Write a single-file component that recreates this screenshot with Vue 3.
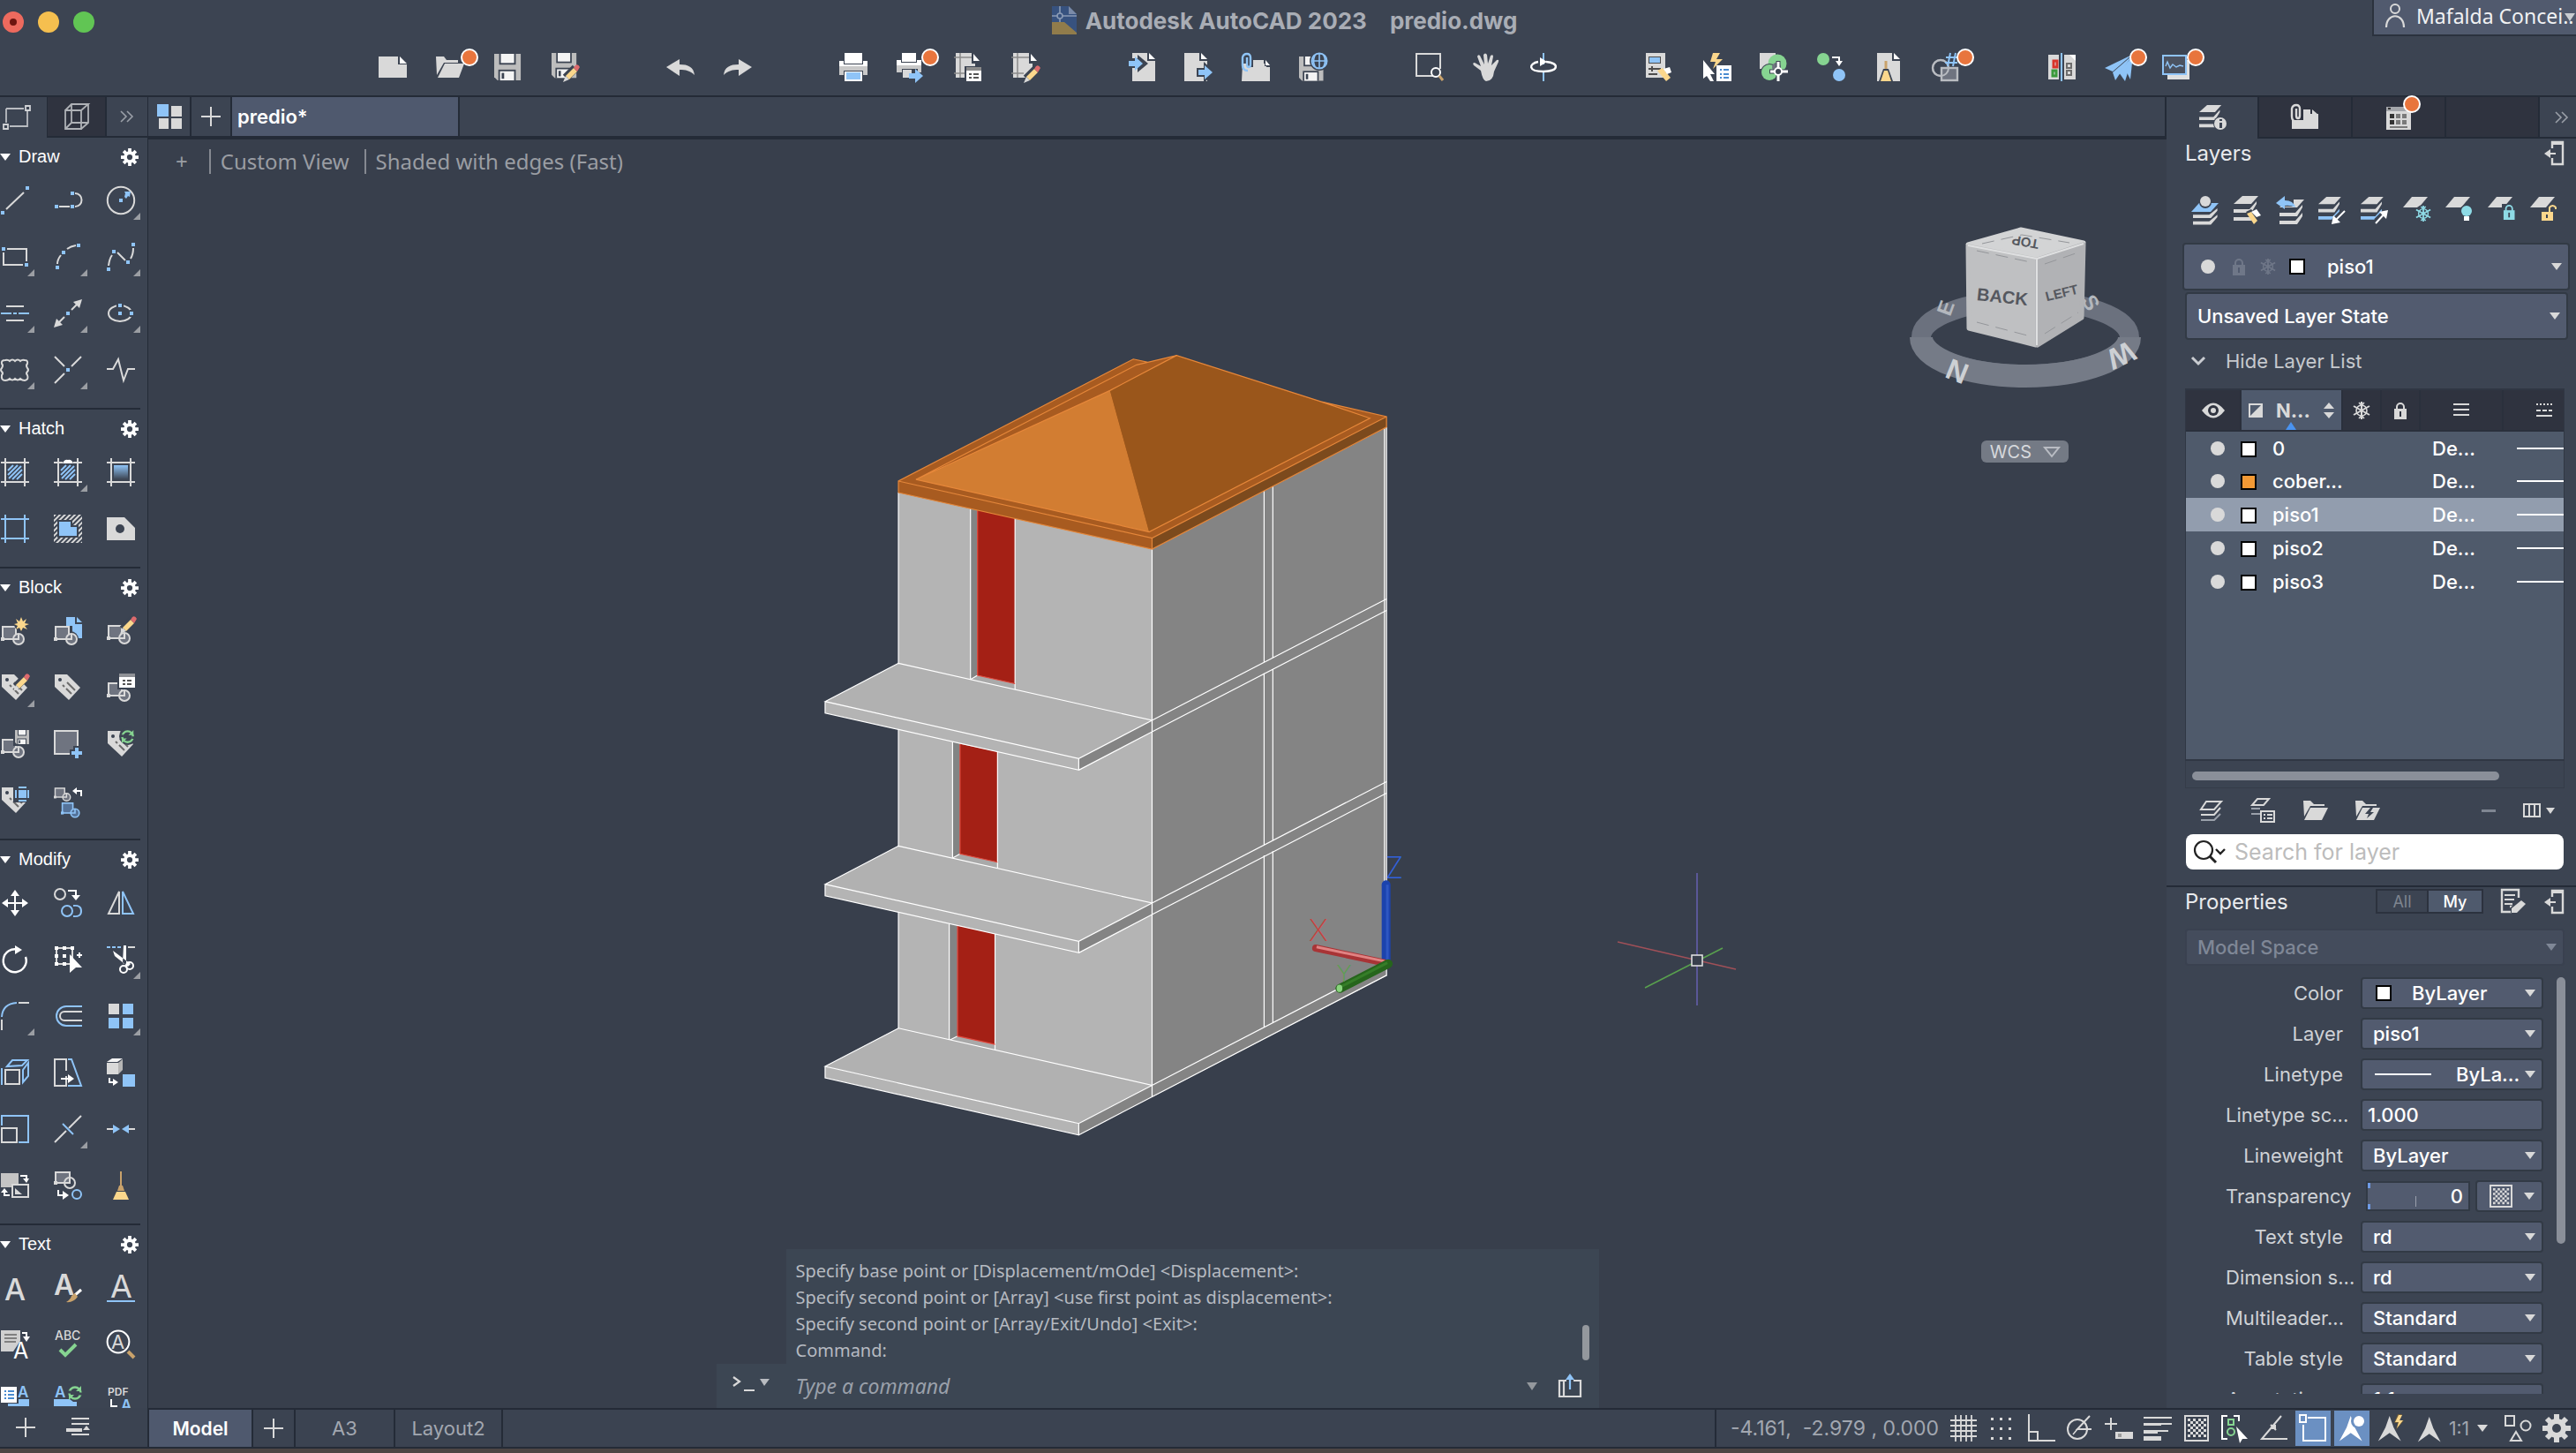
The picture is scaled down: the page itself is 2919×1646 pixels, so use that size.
<template>
  <div class="app">
    <header class="topbar">
      <div class="lights">
        <i class="light red"></i><i class="light yellow"></i><i class="light green"></i>
      </div>
      <h1 class="title">
        <svg class="title-icon" viewBox="0 0 28 32" v-html="icons.dwg"></svg>
        <span>Autodesk AutoCAD 2023</span>
        <span class="title-file">predio.dwg</span>
      </h1>
      <button class="user">
        <svg width="24" height="28" viewBox="0 0 24 28" v-html="icons.person"></svg>
        <span>Mafalda Concei..</span>
        <i class="user-caret"></i>
      </button>
      <nav class="tools">
        <div v-for="(group, g) in toolGroups" :key="g" class="tool-group">
          <button v-for="name in group" :key="name" class="tool" :aria-label="name.replace('*', '')">
            <svg width="32" height="32" viewBox="0 0 32 32" v-html="icons[name.replace('*', '')]"></svg>
            <i v-if="name.endsWith('*')" class="dot"></i>
          </button>
        </div>
      </nav>
    </header>

    <div class="main">
      <aside class="palette">
        <div class="palette-tabs">
          <button class="ptab on" aria-label="Drafting"><svg width="32" height="28" viewBox="0 0 32 28" v-html="icons.drafting"></svg></button>
          <button class="ptab cube" aria-label="Modeling"><svg width="30" height="32" viewBox="0 0 30 32" v-html="icons.modeling"></svg></button>
          <button class="ptab more" aria-label="More"><svg width="16" height="14" viewBox="0 0 16 14" v-html="icons.chevrons"></svg></button>
        </div>
        <div class="palette-body">
          <section v-for="s in sections" :key="s.title" class="section">
            <div class="section-head">
              <i class="tri"></i>
              <h2>{{ s.title }}</h2>
              <button class="gear" aria-label="Settings"><svg width="20" height="20" viewBox="0 0 32 32" v-html="icons.gearWhite"></svg></button>
            </div>
            <div class="grid">
              <button v-for="name in s.items" :key="name" class="cell" :class="{ fly: name.endsWith('+') }" :aria-label="name.replace('+', '')">
                <svg width="32" height="32" viewBox="0 0 32 32" v-html="icons[name.replace('+', '')]"></svg>
              </button>
            </div>
          </section>
        </div>
      </aside>

      <main class="center">
        <div class="doc-tabs">
          <button class="dtab start" aria-label="Start"><svg width="28" height="28" viewBox="0 0 28 28" v-html="icons.start"></svg></button>
          <button class="dtab plus" aria-label="New tab"><svg width="22" height="22" viewBox="0 0 22 22" v-html="icons.plus"></svg></button>
          <button class="dtab file">predio*</button>
        </div>

        <div class="canvas">
          <svg class="scene" viewBox="167 158 2287 1437">
            <svg x="900" y="370" width="740" height="930" viewBox="0 0 1568 1568" preserveAspectRatio="none" class="model">
              <polygon points="248,317 857,425 857,1472 248,1364" fill="#b4b4b4" />
              <polygon points="857,425 1420,192 1420,1240 857,1472" fill="#848484" />
              <g v-for="w in windows" :key="w.y">
                <polygon :points="`${w.x},${w.y} ${w.r},${w.y + 4} ${w.r},${w.b} ${w.x},${w.b + 8}`" fill="#828484" />
                <polygon :points="`${w.r},${w.y + 4} ${w.e},${w.y + 19} ${w.e},${w.b + 16} ${w.r},${w.b}`" fill="#a42015" />
                <polygon :points="`${w.x},${w.b + 8} ${w.r},${w.b} ${w.e},${w.b + 16} ${w.e},${w.b + 27}`" fill="#a9a9a9" />
                <path class="edge" :d="`M${w.x} ${w.y}V${w.b + 8}M${w.e} ${w.y + 19}V${w.b + 27}M${w.x} ${w.b + 8}L${w.r} ${w.b}`" />
                <path class="edge rededge" :d="`M${w.r} ${w.y + 4}V${w.b}L${w.e} ${w.b + 16}`" />
              </g>
              <path class="edge" d="M857 425V1472M248 317V1342M1415 194V1218M1420 192V1240" />
              <g v-for="dy in [0, 349, 697]" :key="dy" :transform="`translate(0 ${dy})`">
                <polygon points="248,643 857,752 681,825 72,716" fill="#b1b1b1" />
                <polygon points="72,716 681,825 681,847 72,738" fill="#b4b4b4" />
                <polygon points="681,825 857,752 857,774 681,847" fill="#848484" />
                <path class="edge" d="M248 643L857 752 681 825 72 716zM72 716V738L681 847V825M681 847L857 774M857 752V774M857 752L1420 520M857 774L1420 542M1126 313V641M1147 305V633" />
              </g>
              <polygon points="248,295 812,62 847,68 916,55 1262,143 1420,172 857,404" fill="#a85b20" />
              <polygon points="248,295 857,404 857,425 248,317" fill="#a85b20" />
              <polygon points="857,404 1420,172 1420,192 857,425" fill="#7c4a1d" />
              <polygon points="290,292 756,122 850,392" fill="#d27d32" />
              <polygon points="756,122 916,55 1380,175 850,392" fill="#9a561b" />
              <path class="edge roof" d="M248 317V295L812 62 847 68 916 55 1262 143 1420 172V192L857 425 248 317M248 295L857 404 1420 172M857 404V425M290 292L850 392 1380 175 1262 143M290 292L820 73 847 68M290 292L756 122 916 55" />
              <path d="M1419 1215V1066" fill="none" stroke="#1c43ad" class="rod" />
              <path d="M1422 1215V1066" fill="none" stroke="#2f57c2" class="shine" />
              <path d="M1250 1187L1415 1215" fill="none" stroke="#a83436" class="rod thin" />
              <path d="M1252 1185L1415 1212" fill="none" stroke="#e08383" class="shine" />
              <path d="M1308 1264L1424 1217" fill="none" stroke="#26651c" class="rod" />
              <path d="M1310 1261L1422 1215" fill="none" stroke="#357d28" class="shine" />
              <ellipse cx="1307" cy="1264" rx="7" ry="7" fill="#8ad47e" />
            </svg>
            <g class="axis">
              <text x="1579" y="995" fill="#3262dc">Z</text>
              <text x="1493" y="1066" fill="#c9423f">X</text>
              <text x="1522" y="1112" fill="#59a04e" class="small">Y</text>
            </g>

            <g fill="none" stroke-width="1.5">
              <path d="M1922 989V1139" stroke="#6660b0" />
              <path d="M1832 1067L1966 1098" stroke="#a05058" />
              <path d="M1863 1119L1951 1074" stroke="#59a04e" />
              <rect x="1916" y="1082" width="12" height="12" fill="#383f4c" stroke="#e6e6e6" />
            </g>

            <g class="viewcube">
              <ellipse cx="2294" cy="382" rx="118" ry="42" fill="none" stroke="#6b717e" stroke-width="22" />
              <path d="M2176 382a118 44 0 0 0 236 0" fill="none" stroke="#757b87" stroke-width="26" />
              <text x="2217" y="432" class="dir" transform="rotate(22 2217 420)">N</text>
              <text x="2403" y="415" class="dir" transform="rotate(155 2403 403)">W</text>
              <text x="2204" y="357" class="dir small" transform="rotate(-70 2204 349)">E</text>
              <text x="2368" y="351" class="dir small" transform="rotate(60 2368 343)">S</text>
              <g stroke-width="5" stroke-linejoin="round">
                <polygon points="2229,277 2289,260 2360,275 2307,292" fill="#d3d4d5" stroke="#d3d4d5" />
                <polygon points="2229,279 2306,294 2306,391 2230,372" fill="#bfc0c2" stroke="#bfc0c2" />
                <polygon points="2308,294 2360,277 2358,360 2308,391" fill="#b1b2b5" stroke="#b1b2b5" />
              </g>
              <path d="M2307 293V391M2229 278L2307 293 2360 276" fill="none" stroke="#dfe0e1" stroke-width="2" />
              <path d="M2239 284L2300 297M2239 365L2300 381M2316 299L2354 286M2316 378L2354 354M2245 276L2290 266 2344 275" fill="none" stroke="#94969a" stroke-dasharray="14 8" />
              <text x="2268" y="343" class="face" transform="rotate(6 2268 336)">BACK</text>
              <text x="2335" y="337" class="face mini" transform="rotate(-14 2335 331)">LEFT</text>
              <text x="2294" y="281" class="face mini" transform="rotate(190 2294 275)">TOP</text>
            </g>
          </svg>

          <div class="view-labels">
            <button>+</button>
            <button>Custom View</button>
            <button>Shaded with edges (Fast)</button>
          </div>

          <button class="wcs"><span>WCS</span><svg width="18" height="12" viewBox="0 0 18 12"><path d="M1 1H17L9 11z" fill="none" stroke="#b9bcc3" stroke-width="2" /></svg></button>

          <div class="command">
            <div class="history">
              <p v-for="(line, i) in history" :key="i">{{ line }}</p>
              <i class="history-bar"></i>
            </div>
            <div class="prompt">
              <button class="prompt-btn" aria-label="Recent commands">
                <svg width="44" height="24" viewBox="0 0 44 24" v-html="icons.prompt"></svg>
              </button>
              <input v-model="command" type="text" placeholder="Type a command" aria-label="Command" />
              <i class="caret-sm"></i>
              <button class="share" aria-label="Expand"><svg width="26" height="28" viewBox="0 0 26 28" v-html="icons.share"></svg></button>
            </div>
          </div>
        </div>
      </main>

      <aside class="panel">
        <div class="panel-tabs">
          <button class="rtab on" aria-label="Layers"><svg width="34" height="30" viewBox="0 0 34 30" v-html="icons.layersInfo"></svg></button>
          <button class="rtab" aria-label="References"><svg width="32" height="30" viewBox="0 0 32 30" v-html="icons.clipDoc"></svg></button>
          <button class="rtab" aria-label="Blocks"><svg width="28" height="28" viewBox="0 0 28 28" v-html="icons.tableDoc"></svg><i class="dot"></i></button>
          <button class="rtab" aria-label="Empty"></button>
          <button class="rtab end" aria-label="More"><svg width="16" height="14" viewBox="0 0 16 14" v-html="icons.chevrons"></svg></button>
        </div>

        <div class="panel-head">
          <h2>Layers</h2>
          <button aria-label="Undock"><svg width="24" height="28" viewBox="0 0 24 28" v-html="icons.undock"></svg></button>
        </div>
        <div class="layer-tools">
          <button v-for="name in layerTools" :key="name" :aria-label="name"><svg width="32" height="32" viewBox="0 0 32 32" v-html="icons[name]"></svg></button>
        </div>
        <div class="combo wide">
          <svg class="combo-icons" width="116" height="24" viewBox="0 0 116 24" v-html="icons.currentLayer"></svg>
          <select v-model="currentLayer" aria-label="Current layer" class="indent">
            <option v-for="l in layers" :key="l.name">{{ l.name }}</option>
          </select>
          <i class="caret"></i>
        </div>
        <div class="combo big">
          <select aria-label="Layer state"><option>Unsaved Layer State</option></select>
          <i class="caret"></i>
        </div>
        <button class="toggle">
          <svg width="18" height="12" viewBox="0 0 18 12"><path d="M2 2L9 9 16 2" fill="none" stroke="#c9ccd1" stroke-width="3" /></svg>
          <span>Hide Layer List</span>
        </button>

        <div class="layer-list">
          <table>
            <colgroup><col class="c1" /><col class="c2" /><col class="c3" /><col class="c3" /><col class="c4" /><col /></colgroup>
            <thead>
              <tr>
                <th><svg width="26" height="18" viewBox="0 0 26 18" v-html="icons.eye"></svg></th>
                <th class="sorted">
                  <div class="name-head">
                    <svg width="16" height="16" viewBox="0 0 16 16" v-html="icons.halfSquare"></svg>
                    <span>N...</span>
                    <svg width="12" height="18" viewBox="0 0 12 18"><path d="M0 7L6 0 12 7zM0 11H12L6 18z" fill="#d9d9d9" /></svg>
                  </div>
                  <i class="sort-mark"></i>
                </th>
                <th><svg width="20" height="20" viewBox="0 0 20 20" v-html="snow('#d9d9d9')"></svg></th>
                <th><svg width="16" height="20" viewBox="0 0 16 20" v-html="lock('#d9d9d9', '#2f333f')"></svg></th>
                <th><svg width="18" height="16" viewBox="0 0 18 16"><path d="M0 1H18M0 7H18M0 13H18" stroke="#d9d9d9" stroke-width="2" /></svg></th>
                <th class="last"><svg width="18" height="16" viewBox="0 0 18 16"><path d="M0 1H18" stroke="#d9d9d9" stroke-width="2" stroke-dasharray="2 2" /><path d="M0 8H18" stroke="#d9d9d9" stroke-width="2" stroke-dasharray="5 2" /><path d="M0 14H18" stroke="#d9d9d9" stroke-width="2" /></svg></th>
              </tr>
            </thead>
            <tbody>
              <tr v-for="l in layers" :key="l.name" :class="{ selected: l.name === currentLayer }">
                <td><i class="bulb"></i></td>
                <td colspan="3"><i class="swatch" :class="{ orange: l.orange }"></i><span>{{ l.label || l.name }}</span></td>
                <td class="weight">De...</td>
                <td><i class="ltype"></i></td>
              </tr>
            </tbody>
          </table>
        </div>
        <div class="hscroll"><i></i></div>

        <div class="list-tools">
          <svg width="26" height="24" viewBox="0 0 26 24" v-html="icons.newLayer"></svg>
          <svg width="30" height="28" viewBox="0 0 30 28" v-html="icons.layerStates"></svg>
          <svg width="28" height="22" viewBox="0 0 28 22" v-html="icons.folder"></svg>
          <svg width="28" height="22" viewBox="0 0 28 22" v-html="icons.folderBolt"></svg>
          <i class="minus"></i>
          <svg width="36" height="18" viewBox="0 0 36 18" v-html="icons.columns"></svg>
        </div>
        <label class="search">
          <svg width="36" height="26" viewBox="0 0 36 26" v-html="icons.search"></svg>
          <input v-model="query" type="text" placeholder="Search for layer" aria-label="Search for layer" />
        </label>

        <div class="panel-head props-head">
          <h2>Properties</h2>
          <div class="switch"><button>All</button><button class="on">My</button></div>
          <button aria-label="Customize"><svg width="28" height="28" viewBox="0 0 28 28" v-html="icons.editDoc"></svg></button>
          <button aria-label="Undock"><svg width="24" height="28" viewBox="0 0 24 28" v-html="icons.undock"></svg></button>
        </div>
        <div class="combo space">
          <select disabled aria-label="Space"><option>Model Space</option></select>
          <i class="caret"></i>
        </div>
        <div class="props">
          <div class="prop-list">
            <div v-for="(p, i) in props" :key="i" class="prop">
              <label :for="'prop' + i"><span>{{ p.label }}</span></label>
              <input v-if="p.kind === 'input'" :id="'prop' + i" class="field" type="text" :value="p.value" />
              <div v-else-if="p.kind === 'slider'" class="transparency">
                <input :id="'prop' + i" type="text" :value="p.value" />
                <button aria-label="Transparency mode"><svg width="26" height="26" viewBox="0 0 26 26" v-html="icons.checker"></svg><i class="caret-inline"></i></button>
              </div>
              <div v-else class="combo small">
                <i v-if="p.kind === 'color'" class="swatch over"></i>
                <i v-if="p.kind === 'line'" class="ltype over"></i>
                <select :id="'prop' + i" :class="p.kind"><option>{{ p.value }}</option></select>
                <i class="caret"></i>
              </div>
            </div>
          </div>
          <i class="vscroll"></i>
        </div>
      </aside>
    </div>

    <footer class="status">
      <div class="palette-foot">
        <button aria-label="Add"><svg width="22" height="22" viewBox="0 0 22 22" v-html="icons.plus"></svg></button>
        <button aria-label="Menu"><svg width="26" height="22" viewBox="0 0 26 22" v-html="icons.menu"></svg></button>
      </div>
      <button class="stab model-tab">Model</button>
      <button class="stab add" aria-label="New layout"><svg width="22" height="22" viewBox="0 0 22 22" v-html="icons.plus"></svg></button>
      <button class="stab a3">A3</button>
      <button class="stab layout">Layout2</button>
      <div class="status-right">
        <span class="coords">-4.161,&nbsp; -2.979 , 0.000</span>
        <button v-for="name in statusTools" :key="name" class="sbtn" :class="{ on: name === 'osnap' || name === 'annoVis' }" :aria-label="name">
          <svg width="32" height="32" viewBox="0 0 32 32" v-html="icons[name]"></svg>
        </button>
        <button class="scale">1:1<i class="caret-inline"></i></button>
        <button class="sbtn" aria-label="Workspace"><svg width="32" height="32" viewBox="0 0 32 32" v-html="icons.shapes"></svg></button>
        <button class="sbtn" aria-label="Settings"><svg width="32" height="32" viewBox="0 0 32 32" v-html="icons.gearGrey"></svg></button>
      </div>
    </footer>
    <div class="desktop"></div>
  </div>
</template>

<script setup>
import { ref } from 'vue'

const G = '#d9d9d9'
const W = '#ffffff'
const B = '#8fc4f7'
const Y = '#fbd78c'
const K = '#3c4452'
const M = '#6f7480'
const GR = '#86d491'
const T = '#8edbe6'

// small drawing helpers for the icon set
const L = (d, c = G, w = 2, extra = '') => `<path d="${d}" fill="none" stroke="${c}" stroke-width="${w}" ${extra}/>`
const F = (d, c = G) => `<path d="${d}" fill="${c}" fill-rule="evenodd"/>`
const R = (x, y, w, h, c = G) => `<rect x="${x}" y="${y}" width="${w}" height="${h}" fill="${c}"/>`
const C = (x, y, r, c = G, w = 2, fill = 'none') => `<circle cx="${x}" cy="${y}" r="${r}" fill="${fill}" stroke="${c}" stroke-width="${w}"/>`
const D = (x, y, r, c = G) => `<circle cx="${x}" cy="${y}" r="${r}" fill="${c}"/>`
const N = (x, y) => R(x - 2, y - 2, 4, 4, B)
const at = (x, y, s, k = 1) => `<g transform="translate(${x} ${y}) scale(${k})">${s}</g>`
const A = (x, y, size, c, text, weight = 400) =>
  `<text x="${x}" y="${y}" font-family="Inter, sans-serif" font-size="${size}" font-weight="${weight}" fill="${c}">${text}</text>`

const frame = (c) => L('M5 0V32M27 0V32M0 5H32M0 27H32', c)
const hatchLines = L('M8 14L14 8M8 19L19 8M9 23L23 9M13 24L24 13M18 24L24 18', B)
const blk = (c = G, f = M) =>
  `<rect x="2" y="11" width="15" height="14" fill="${f}" stroke="${c}" stroke-width="2"/>` + R(0, 23, 4, 4, c) + C(20, 25, 6, c, 2, f) + L('M20 19V25H14', c)
const pencil = L('M17 15L28 4', K, 9) + F('M26 4L30 8 21 17 17 13z', Y) + F('M17 13L21 17 14 20z', G) + F('M26 4L28 1Q31-1 33 3L30 8z', '#dd6a6d')
const tag = F('M1 1H15L30 16 17 30 1 15z') + D(7, 7, 2, K) + L('M10 13L12 15M14 17L20 23M15 10L24 19', '#6b6b6b')
const floppy = F('M0 0H32V32H4L0 28z', '#bdbdbd') + R(6, 0, 20, 13, K) + R(8, 0, 16, 11, '#f4f4f4') + R(5, 19, 21, 13, K) + R(7, 21, 17, 11, '#f4f4f4') + R(9, 23, 3, 7, K)
const sync = C(8, 8, 6.5, GR, 2.5) + L('M-1 7H3M13 9H17', K, 3) + F('M15 0V6H9zM1 16V10H7z', GR)
const page = F('M3 0H20V9H29V32H3z') + F('M22 0L29 7H22z', W)
const sheet = R(2, 0, 22, 28) + L('M0 5H20M0 23H14M7 0V28', '#8b8b8b', 1.5) + F('M20 0H30V12H20z', K) + F('M22 1L29 9H22z', W)
const stack = (top = G, mid = G, low = G) => F('M10 0H28L20 9H0z', top) + F('M0 15H18L26 6V9L20 19H0z', mid) + F('M0 24H18L26 15V19L20 28H0z', low)
const leaf = F('M10 1H28L18 13H0z')
const clip = (c = B) => L('M6 5V13Q6 16 8 16T10 13V5Q10 1 6 1T1 5V14Q1 20 7 20', c, 2.4)
const arrowR = L('M0 8H8', B, 6) + F('M7 0L16 8 7 16z', B)
const gear = (c) => D(16, 16, 11, c) + L('M16 0V32M0 16H32M5 5L27 27M27 5L5 27', c, 6) + D(16, 16, 5, K)
const snow = (c) => L('M10 0V20M1 5L19 15M19 5L1 15', c) + C(10, 10, 6, c, 1.6) + L('M7 1L10 4 13 1M7 19L10 16 13 19', c, 1.6)
const lock = (c, k = K) => L('M4 9V6a4 4 0 0 1 8 0V9', c) + R(1, 8, 14, 12, c) + R(7, 11, 2, 6, k)
const compass = (c = G) => F('M16 0L21 14 30 31 16 21 2 31 11 14z', c)
const checks = (s, n, c) => {
  let out = ''
  for (let i = 0; i < n; i++) for (let j = 0; j < n; j++) if ((i + j) % 2 === 0) out += R(i * s, j * s, s, s, c)
  return out
}
const folderPath = 'M0 0H8L12 4H24V6H8L1 18z M8 8H28L21 22H1z'

const icons = {
  dwg: F('M0 0H19L28 9V32H0z', '#37527f') + F('M19 0V9H28z', '#7b8ba8') + F('M0 18H14L28 30V32H0z', '#917c4b') + L('M9 0V18M0 11H28', '#8b9bb5', 1.6) + C(9, 11, 3, '#8b9bb5', 1.6, '#37527f'),
  person: C(12, 6, 5) + L('M2 27C2 10 22 10 22 27', G, 2.2),
  chevrons: L('M1 1L7 7 1 13M8 1L14 7 8 13', '#9a9fa8', 1.6),
  plus: L('M11 0V22M0 11H22'),
  start: R(0, 0, 13, 14, B) + R(16, 2, 12, 12) + R(2, 16, 11, 12) + R(16, 16, 12, 12),
  drafting: L('M4 4H24M28 7V24H8M4 4V20', '#b9bcc1', 1.8) + L('M26 1H31V6H26zM1 22H6V27H1z', '#d0d2d5', 1.8),
  modeling: L('M2 9H20V30H2zM2 9L9 2H28L20 9M28 2V23L20 30M9 2V23H28M9 23L2 30', '#aeb1b6', 1.8),

  // main toolbar
  new: F('M0 4H22V13H32V28H0z') + F('M24 4L32 12H24z', W),
  open: F('M0 4H9L12 8H25V11H9L1 25z') + F('M10 12H32L26 28H2z'),
  save: at(1, 1, floppy, 0.94),
  saveAs: at(1, 0, floppy, 0.88) + at(0, 13, pencil),
  undo: F('M0 16L15 7V13C25 13 31 16 32 25C27 20 22 19 15 19V26z'),
  redo: F('M32 16L17 7V13C7 13 1 16 0 25C5 20 10 19 17 19V26z'),
  print: R(6, 0, 20, 12, W) + F('M0 9H5V13H27V9H32V15H0z', W) + R(0, 15, 32, 10, '#c9c9c9') + R(5, 20, 22, 12, K) + R(6, 21, 20, 11, W) + R(8, 22, 16, 8, B),
  plot: R(6, 0, 16, 10, W) + F('M0 8H5V11H23V8H28V14H0z', W) + R(0, 14, 28, 8, '#c9c9c9') + R(6, 18, 18, 10, K) + R(7, 19, 10, 9) + at(14, 18, arrowR),
  pageSetup: sheet + R(12, 15, 20, 17, K) + R(14, 16, 17, 4, '#8b8b8b') + R(14, 20, 17, 12, W) + L('M17 24H20M22 24H28M17 28H20M22 28H28', '#555'),
  pageEdit: sheet + at(0, 14, pencil),
  importFile: at(3, 0, page) + F('M0 6H12V2L24 12 12 22V17H0z', K) + at(2, 4, arrowR),
  exportFile: at(-3, 0, page) + at(16, 14, L('M-2 8H8', K, 10) + F('M6-4L19 8 6 20z', K) + arrowR),
  attach: F('M1 12H28V16H32V32H0z') + F('M12 8H26V15H32V8z', K) + R(12, 8, 13, 8) + F('M27 8L32 14H27z', W) + L('M10 4V16', K, 6) + clip(),
  web: at(0, 4, floppy, 0.86) + D(23, 9, 11, K) + C(23, 9, 8.5, B) + L('M15 9H31M23 1V17M18 3Q15 9 18 15M28 3Q31 9 28 15', B, 1.6),
  zoomWin: L('M21 26H2V1H29V18') + C(24, 22, 5, W, 2, K) + L('M28 26L32 31', '#c9a26b', 3),
  pan: F('M10 20L2 14Q0 11 3 11L10 15 6 4Q7 1 9 3L14 13 13 2Q15-1 17 2L18 12 21 3Q24 1 24 4L22 14 28 8Q31 7 30 10L25 21Q24 32 16 32 12 31 10 20z'),
  orbit: L('M16 0V13M16 22V32', B) + L('M19 10C34 11 34 21 16 21S-1 12 10 10', W, 2.4) + F('M12 5L20 10 12 15z', W),
  matchProps: R(1, 0, 22, 28) + R(4, 4, 14, 8, '#4d4d4d') + R(5, 5, 12, 6, B) + L('M4 18H18M4 24H14M8 15V21', '#4d4d4d') + F('M14 20L20 17 29 28 24 32z', Y) + F('M21 18L28 16 30 22 25 24z', W),
  quick: F('M12 0H20L16 7H23L12 18 15 10H9z', Y) + R(16, 14, 17, 18, W) + L('M20 19H22M24 19H30M20 24H22M24 24H30M20 28H22M24 28H30', '#4a8bd0') + F('M1 8L14 24 9 24 13 32 9 32 5 26 1 29z', W),
  center: R(0, 0, 18, 18) + D(20, 12, 10.5, GR) + D(11, 22, 10, K) + D(11, 22, 9, GR) + D(19, 16, 5, M) + L('M21 9V32M11 21H32', K, 5) + L('M21 10V32M12 21H32', W, 3) + C(21, 21, 4, W, 2, K),
  replace: D(7, 7, 7, GR) + D(25, 25, 7, B) + L('M17 5H25V10', W) + F('M21 9H29L25 15z', W),
  clean: at(0, 0, page) + L('M13 9V20', '#c9a26b', 3) + F('M10 18H16L21 32H5z', K) + F('M11 20H15L19 32H7z', Y),
  count: C(10, 17, 9, '#a9adb5', 2.4, 'none') + `<rect x="11" y="17" width="18" height="14" fill="${M}" stroke="#b9bcc1" stroke-width="2.4"/>` + C(10, 17, 9, '#b9bcc1', 2) + L('M21 0L18 15M27 0L24 15M16 5H30M15 11H29', B),
  compare: R(1, 2, 12, 28) + R(19, 2, 13, 28) + F('M25 2H32V9z', W) + L('M16 0V32', B) + L('M7 9H11V16H7z', '#d8342a', 3) + L('M6 20H10V26H6z', '#3b9a3b', 3) + L('M22 12H27V17H22zM22 20H27V25H22z', '#6d6d6d'),
  send: F('M31 2L0 17 9 21z', B) + F('M31 3L9 22 12 31z', B) + F('M32 3L16 22 23 32z', B) + F('M32 2L24 20 29 30z', B),
  monitor: F('M6 8H31V30H6z', '#e0e0e0') + `<rect x="1" y="3" width="26" height="21" fill="#4b5260" stroke="${B}" stroke-width="2"/>` + L('M4 15L6 10 9 17 12 13 16 16 20 14 24 15', B, 1.4),

  // draw
  line: L('M6 26L26 7') + N(2, 30) + N(30, 2),
  pline: L('M6 23H18M24 8C34 8 34 23 24 23') + N(3, 23) + N(21, 23) + N(21, 8),
  circle: C(16, 16, 15.2) + N(16, 16) + F('M20 12L21 8 20 6 27 6 26 12 24 11 22 14z', B),
  rect: L('M7 7H29V21M3 11V25H25') + N(3, 7) + N(29, 25),
  arc: L('M4 24Q4 19 8 14M15 7Q19 4 25 3') + N(4, 28) + N(11, 11) + N(28, 3),
  spline: L('M2 26Q3 18 6 14M12 11L21 20M27 18Q30 13 30 6') + N(2, 30) + N(8, 10) + N(24, 22) + N(30, 2),
  mline: L('M6 8H26M6 24H26') + L('M0 16H12M14 16H18M20 16H32', B),
  xline: L('M4 28L12 20M20 12L28 4') + F('M32 0L22 3 29 10z') + F('M0 32L3 22 10 29z') + N(16, 16),
  ellipse: `<ellipse cx="15" cy="16" rx="13" ry="9" fill="none" stroke="${G}" stroke-width="2"/>` + R(11, 5, 8, 4, K) + R(26, 12, 5, 8, K) + N(15, 16) + N(28, 16) + N(15, 7),
  cloud: L('M5 5q3-1 5 1q3-3 6 0q3-3 6 0q2-2 5-1q4 0 3 4q-2 2 0 5q2 2 0 4q-2 2 0 4q2 5-3 6q-3 0-5-2q-3 3-6 0q-3 3-6 0q-2 2-5 2q-5 0-4-6q2-2 0-4q-2-2 0-4q2-3 0-5q-1-4 4-4z'),
  point: L('M1 1L12 12M31 1L20 12M1 31L12 20') + N(16, 16),
  zigzag: L('M0 15H7L13 4 19 28 24 15H32'),

  // hatch
  hatch: frame(G) + hatchLines,
  hatchEdit: frame(G) + hatchLines + R(10, 0, 12, 6, K) + F('M10 6Q12 1 16 2 20 1 22 6z', W),
  gradient: '<defs><linearGradient id="fade" x1="0" y1="0" x2="0" y2="1"><stop offset="0" stop-color="#8fc4f7"/><stop offset="1" stop-color="#3c4452"/></linearGradient></defs>' + frame(G) + R(8, 8, 16, 16, 'url(#fade)'),
  boundary: frame(B),
  region: '<defs><pattern id="diag" width="4" height="4" patternUnits="userSpaceOnUse" patternTransform="rotate(45)"><rect width="2" height="4" fill="#d9d9d9"/></pattern></defs>' + F('M0 0H32V32H0zM4 6H21V12H28V26H4z', 'url(#diag)') + F('M6 8H19V14H26V24H6z', B),
  wipeout: F('M0 3H20L32 15V29H0z') + D(15, 16, 5, K),

  // block
  insert: blk() + D(23, 8, 8, K) + F('M23 0L25 5 29 2 27 7 32 8 27 10 30 14 25 12 23 16 21 12 17 14 19 10 15 8 19 7 17 2 21 5z', Y),
  createBlock: F('M14 0H24V8H32V24H14z', B) + F('M26 0L32 6H26z', B) + R(0, 10, 21, 20, K) + D(19, 25, 9, K) + blk(),
  editBlock: at(0, -1, blk()) + at(1, -1, pencil),
  editAttr: tag + pencil,
  attr: tag,
  blockProps: blk() + R(12, 0, 20, 18, K) + R(14, 0, 18, 4, '#8f9196') + R(14, 4, 18, 12, W) + L('M18 8H21M23 8H28M18 12H21M23 12H28', '#555'),
  saveBlock: blk() + R(14, 0, 18, 18, K) + at(16, 0, floppy, 0.5),
  setBase: `<rect x="1" y="1" width="26" height="26" fill="${M}" stroke="${G}" stroke-width="2"/>` + L('M26 18V32M18 26H32', K, 8) + L('M26 20V32M20 26H32', B, 4),
  syncAttr: tag + D(24, 7, 10, K) + at(16, 0, sync, 0.95),
  blockAttr: tag + R(14, 0, 18, 18, K) + R(20, 4, 9, 9, B) + L('M20 1H29M20 16H29M17 4V13M31 4V13', B),
  swapBlock: at(0, -6, blk(), 0.72) + at(8, 10, blk(B, '#55739a'), 0.8) + L('M24 5H31V11', W) + F('M26 1V9L21 5z', W),

  // modify
  move: L('M16 4V28M4 16H28', W) + F('M16 1L21 8H11zM16 31L21 24H11zM1 16L8 11V21zM31 16L24 11V21z', W),
  copy: C(7, 6, 6) + L('M16 2H25V8', W) + F('M20 7H30L25 13z', W) + C(15, 25, 6, B) + L('M22 19Q31 18 31 25T22 31', B),
  mirror: L('M14 3V28H2z') + L('M18 3V28H30z', B),
  rotate: L('M20 5A13 13 0 1 0 28 13', W, 2.4) + F('M16 0L24 5 16 10z', W),
  stretchSel: L('M3 3H21V21H3z', G, 2) + [[1, 1], [10, 1], [19, 1], [1, 10], [10, 10], [1, 19], [10, 19]].map((p) => R(p[0], p[1], 4, 4, W)).join('') + L('M29 8V14M26 11H32', W) + F('M18 10L32 25H25L18 31z', W),
  trim: L('M0 2H16', B, 2, 'stroke-dasharray="4 2"') + L('M24 2H32') + F('M19 0L22 0 22 22 18 20zM7 6L27 21 24 24 9 12z', W) + C(19, 27, 4, W) + C(26, 23, 4, W),
  fillet: L('M1 17Q2 2 18 1', B) + L('M20 1H32M1 20V32'),
  offset: L('M32 5H14A11 11 0 0 0 14 27H32', B) + L('M32 11H12A5 5 0 0 0 12 21H32'),
  array: R(2, 2, 12, 12) + R(18, 2, 12, 12, B) + R(2, 18, 12, 12, B) + R(18, 18, 12, 12, B),
  extrude: L('M5 13H21V29H5z') + L('M1 11V30M7 9L13 2H30L24 8zM25 13L31 5V20L25 27z', B),
  taper: L('M14 20V31H1V1H14V14') + L('M16 1H20L31 31H16', B) + L('M8 23H18', W) + F('M16 18L23 23 16 28z', W),
  solid: F('M0 4L6 0H18L12 4z', '#f4f4f4') + R(0, 5, 13, 13) + F('M13 5L18 1V13L13 18z', '#b5b5b5') + R(18, 18, 14, 14, B) + L('M3 22V27H8', W) + F('M7 23L13 27 7 31z', W),
  scale: L('M1 12V1H31V31H20', B) + L('M1 15H18V31H1z'),
  breakAt: L('M1 31L14 18M17 15L31 1') + L('M10 10L22 22', B),
  join: L('M0 16H8M24 16H32') + F('M7 11L15 16 7 21zM25 11L17 16 25 21z', B),
  order: R(0, 2, 20, 16, '#c4c4c4') + `<rect x="13" y="15" width="18" height="14" fill="${K}" stroke="${G}" stroke-width="2"/>` + F('M16 19L24 26H16z') + L('M22 5H29V9M10 27H4V23', W) + F('M25 8H32L29 13zM0 24L4 19 8 24z', W),
  explode: `<rect x="2" y="1" width="16" height="12" fill="${M}" stroke="${G}" stroke-width="2"/>` + R(0, 11, 4, 4) + C(18, 13, 6, G, 2, 'none') + L('M5 21V27H11', W) + F('M10 22L17 27 10 32z', W) + C(26, 26, 5, B),
  purge: L('M16 0V18', '#c9a26b', 2) + F('M14 16H18L20 22H12z', '#c9a26b') + F('M11 23H21L25 32H7z', Y),

  // text
  mtext: A(4, 30, 34, G, 'A', 500),
  textStyle: A(0, 24, 32, G, 'A', 600) + L('M24 24L31 18', W, 3) + F('M24 22L27 26Q22 33 14 32 19 29 20 25z', '#c9a26b'),
  dtext: A(4, 27, 36, G, 'A', 400) + L('M0 31H32', B),
  align: F('M0 0H22V12L14 24H0z', '#d0d0d0') + L('M4 5H18M4 9H18M4 13H17', '#666', 1.6) + L('M24 3H29V8', W) + F('M25 7H33L29 13z', W) + A(14, 32, 25, W, 'A'),
  spell: A(1, 11, 14, G, 'ABC', 500) + L('M7 22L13 28 25 16', GR, 4),
  find: C(13, 13, 12.4, W) + A(5, 21, 22, G, 'A') + L('M24 24L31 31', '#c9a26b', 4),
  table: R(0, 0, 18, 18, W) + L('M4 5H6M8 5H15M4 9H6M8 9H15M4 13H6M8 13H15', '#4a8bd0') + A(19, 12, 17, B, 'A', 600) + F('M20 14H32V22H8V19H20z', B),
  updateText: A(1, 12, 17, B, 'A', 600) + F('M0 14H18L22 17H26V22H0z', B) + at(16, -1, sync),
  pdf: A(1, 10, 12, G, 'PDF', 600) + L('M5 14V22H12', W) + A(16, 27, 17, B, 'A', 600),

  // layers
  layerIso: at(2, 14, F('M0 8H20L30 0V3L22 12H0zM0 16H20L30 8V11L22 20H0z'), 0.92) + F('M9 8H31L22 18H0z', B) + D(16, 7, 7, K) + D(16, 6, 6),
  layerMatch: stack() + F('M14 18L20 15 29 25 24 32z', K) + F('M15 20L20 18 27 28 23 32z', Y) + F('M20 18L26 15 31 22 26 24z', W),
  layerPrev: at(4, 4, stack()) + F('M-2 0H20V12H-2z', K) + F('M0 8L10 0V5Q20 5 22 13 16 10 10 11V15z', B),
  layerIn: at(0, 1, stack(G, G, B), 0.92) + L('M30 17L18 29', K, 8) + L('M30 17L19 28', W) + F('M15 32L17 22 25 30z', W),
  layerOut: at(0, 1, stack(G, G, B), 0.92) + L('M30 17L18 29', K, 8) + L('M17 31L27 20', W) + F('M31 16L29 26 21 18z', W),
  layerFreeze: leaf + D(23, 20, 10, K) + at(14, 11, snow(T), 0.9),
  layerOff: leaf + D(24, 18, 8, K) + D(24, 17, 6, T) + R(21, 23, 6, 5, W),
  layerLock: leaf + R(16, 9, 16, 20, K) + at(17, 9, lock(T), 0.9),
  layerUnlock: leaf + R(13, 17, 16, 12, K) + R(13, 18, 13, 10, Y) + L('M22 18V13a4 4 0 0 1 7 0V15', Y) + R(18, 21, 2, 4, K),
  currentLayer: D(8, 12, 8) + at(35, 2, lock('#6f7788', '#525b6f')) + at(67, 3, snow('#6f7788'), 0.9) + `<rect x="101" y="4" width="16" height="16" fill="#fff" stroke="#000" stroke-width="2"/>`,
  layersInfo: at(2, 0, stack(), 0.9) + D(26, 21, 8, K) + D(26, 21, 7) + R(25, 20, 3, 6, K) + R(25, 16, 3, 2, K),
  clipDoc: F('M1 16H12V6H22V11H31V28H1z') + F('M24 6L31 12H24z', G) + R(0, 0, 14, 18, '#2f333f') + clip(G),
  tableDoc: R(0, 2, 28, 26) + R(0, 2, 28, 5, '#a4a6aa') + R(2, 3, 3, 2, '#333') + R(4, 10, 5, 5, '#333') + R(11, 10, 5, 5, '#7a7a7a') + R(18, 10, 5, 5, '#7a7a7a') + R(4, 17, 5, 5, '#333') + R(11, 17, 5, 5, '#7a7a7a') + R(18, 17, 5, 5, '#7a7a7a') + R(4, 24, 20, 2, '#7a7a7a'),
  undock: L('M10 9V2H22V27H10V20', G, 2.4) + L('M10 3H22', G, 4) + L('M5 15H14', G, 2) + F('M1 15L8 10V20z'),
  eye: F('M0 9Q13-8 26 9 13 26 0 9z') + D(13, 9, 6, '#2f333f') + D(13, 9, 3, G),
  halfSquare: L('M1 1H15V15H1z') + F('M15 1V15H1z'),
  newLayer: L('M8 2H25L17 11H2zM2 17H17L24 9') + L('M2 23H17L24 16', '#9aa0aa'),
  layerStates: L('M9 1H22L16 8H3z') + L('M2 12H12M2 18H12', '#9aa0aa') + `<rect x="13" y="15" width="15" height="12" fill="${K}" stroke="${G}" stroke-width="2"/>` + L('M16 19H18M20 19H26M16 23H18M20 23H26'),
  folder: F(folderPath),
  folderBolt: F(folderPath) + F('M17 8H20L17 13H21L13 20 15 15H11z', K),
  columns: L('M1 2H19V16H1zM7 2V16M13 2V16') + F('M26 6H36L31 13z'),
  search: C(11, 11, 10, '#222', 2.2) + L('M18 18L25 25', '#222', 3) + L('M25 10L30 15 35 10', '#222', 2.4),
  editDoc: L('M16 20H10M12 26H1V1H20V10', G, 2.4) + L('M4 7H16M4 12H15M4 17H13') + F('M22 10L28 16 18 27H11V21z', K) + F('M23 13L28 17 18 27H12V22z'),
  checker: L('M1 1H25V25H1z') + at(4, 4, checks(2.6, 7, G)),
  prompt: L('M2 2L9 7 2 12', G, 2.2) + R(14, 16, 12, 2) + F('M32 4H43L37 12z', '#b9bcc1'),
  share: L('M9 8H1V26H25V8H17M6 8V26', G, 2.2) + L('M13 6V18', B, 2.2) + F('M13 0L18 7H8z', B),
  menu: L('M6 1H26M6 7H26M6 19H26') + R(0, 12, 18, 4) + F('M19 14L23 9 27 14z'),

  // status bar
  gridOn: L('M7 1V31M13 1V31M19 1V31M25 1V31M1 7H31M1 13H31M1 19H31M1 25H31', G, 1.8),
  snapOn: [4, 15, 26].map((y) => [2, 12, 22].map((x) => R(x + 1, y, 3, 3)).join('')).join(''),
  ortho: L('M2 0V30H32M2 20H12V30'),
  polar: C(13, 17, 11) + L('M29 17H13L27 2') + L('M8 23L13 17', G, 1.5),
  dyn: L('M7 4V18M0 11H14') + R(12, 20, 20, 8) + R(15, 22, 4, 4, '#9b9b9b'),
  lweight: R(0, 3, 32, 2) + R(0, 10, 20, 3) + R(0, 10, 32, 2) + R(0, 18, 16, 4) + R(0, 18, 28, 2) + R(0, 25, 20, 5),
  transp: L('M3 2H29V30H3z') + at(6, 5, checks(3, 7, G)),
  cycle: L('M7 2H1V28H7M14 2H20V8', W) + L('M8 6H14V12H8z', GR) + C(11, 20, 4, GR) + F('M17 14L30 28H24L21 33z', W),
  angle: L('M31 28H2L24 2M12 12L18 18') + R(13, 12, 5, 5),
  osnap: L('M10 4H30V30H5V12', W) + L('M1 1H8V9H1z', W),
  annoVis: at(0, 2, compass(W), 0.92) + D(23, 8, 8, '#6b90c2') + D(24, 8, 6, W),
  annoAuto: at(0, 2, compass(), 0.92) + F('M24 0H29L26 7H31L22 18 24 10H20z', '#6b5b3a') + F('M25 1H29L26 7H30L23 16 25 9H21z', Y),
  anno: at(1, 3, compass(), 0.92),
  shapes: L('M2 2H12V13H2z') + C(25, 13, 5.5) + L('M14 20L20 30H8z'),
  gearWhite: gear(W),
  gearGrey: gear(G)
}

const toolGroups = [
  ['new', 'open*', 'save', 'saveAs'],
  ['undo', 'redo'],
  ['print', 'plot*', 'pageSetup', 'pageEdit'],
  ['importFile', 'exportFile', 'attach', 'web'],
  ['zoomWin', 'pan', 'orbit'],
  ['matchProps', 'quick', 'center', 'replace', 'clean', 'count*'],
  ['compare', 'send*', 'monitor*']
]

const sections = [
  { title: 'Draw', items: ['line', 'pline', 'circle+', 'rect+', 'arc+', 'spline+', 'mline+', 'xline+', 'ellipse+', 'cloud+', 'point+', 'zigzag'] },
  { title: 'Hatch', items: ['hatch', 'hatchEdit+', 'gradient', 'boundary', 'region', 'wipeout'] },
  { title: 'Block', items: ['insert', 'createBlock', 'editBlock', 'editAttr+', 'attr', 'blockProps', 'saveBlock', 'setBase', 'syncAttr', 'blockAttr', 'swapBlock'] },
  {
    title: 'Modify',
    items: ['move', 'copy', 'mirror', 'rotate', 'stretchSel', 'trim+', 'fillet+', 'offset', 'array+', 'extrude', 'taper', 'solid', 'scale', 'breakAt+', 'join', 'order', 'explode', 'purge']
  },
  { title: 'Text', items: ['mtext', 'textStyle', 'dtext', 'align', 'spell', 'find', 'table', 'updateText', 'pdf'] }
]

const layerTools = ['layerIso', 'layerMatch', 'layerPrev', 'layerIn', 'layerOut', 'layerFreeze', 'layerOff', 'layerLock', 'layerUnlock']
const statusTools = ['gridOn', 'snapOn', 'ortho', 'polar', 'dyn', 'lweight', 'transp', 'cycle', 'angle', 'osnap', 'annoVis', 'annoAuto', 'anno']

const layers = [
  { name: '0' },
  { name: 'cobertura', label: 'cober...', orange: true },
  { name: 'piso1' },
  { name: 'piso2' },
  { name: 'piso3' }
]

const props = [
  { label: 'Color', value: 'ByLayer', kind: 'color' },
  { label: 'Layer', value: 'piso1' },
  { label: 'Linetype', value: 'ByLa...', kind: 'line' },
  { label: 'Linetype sc...', value: '1.000', kind: 'input' },
  { label: 'Lineweight', value: 'ByLayer' },
  { label: 'Transparency', value: '0', kind: 'slider' },
  { label: 'Text style', value: 'rd' },
  { label: 'Dimension s...', value: 'rd' },
  { label: 'Multileader...', value: 'Standard' },
  { label: 'Table style', value: 'Standard' },
  { label: 'Annotation...', value: '1:1' }
]

// x: opening edge, r: glass edge, e: far edge, y/b: top and bottom
const windows = [
  { x: 421, r: 438, e: 528, y: 346, b: 666 },
  { x: 378, r: 396, e: 486, y: 793, b: 1007 },
  { x: 370, r: 390, e: 480, y: 1140, b: 1355 }
]

const history = [
  'Specify base point or [Displacement/mOde] <Displacement>:',
  'Specify second point or [Array] <use first point as displacement>:',
  'Specify second point or [Array/Exit/Undo] <Exit>:',
  'Command:'
]

const currentLayer = ref('piso1')
const command = ref('')
const query = ref('')
</script>

<style>
body {
  margin: 0;
  background: #3c4452;
}
</style>

<style scoped>
.app {
  display: flex;
  flex-direction: column;
  height: 100vh;
  overflow: hidden;
  background: #3c4452;
  color: #e8eaed;
  font-family: Inter, "Liberation Sans", sans-serif;
  font-size: 22px;
}

.app * {
  box-sizing: border-box;
}

button {
  padding: 0;
  border: 0;
  background: none;
  color: inherit;
  font: inherit;
  text-align: left;
}

svg {
  display: block;
  flex: none;
  overflow: visible;
}

h1,
h2,
p {
  margin: 0;
  font-size: inherit;
  font-weight: 400;
}

/* top bar */
.topbar {
  position: relative;
  flex: none;
  display: flex;
  flex-direction: column;
  height: 110px;
  border-bottom: 2px solid #242b37;
}

.lights {
  position: absolute;
  top: 13px;
  left: 3px;
  display: flex;
  gap: 16px;
}

.light {
  width: 24px;
  height: 24px;
  border-radius: 50%;
}

.light.red {
  border: 8px solid #ed6a5e;
  background: #6e1510;
}

.light.yellow {
  background: #f5bf4f;
}

.light.green {
  background: #61c554;
}

.title {
  display: flex;
  align-items: center;
  justify-content: center;
  height: 46px;
  padding-right: 8px;
  color: #a9adb5;
  font-size: 26px;
  font-weight: 700;
}

.title-icon {
  width: 28px;
  height: 32px;
  margin-right: 10px;
}

.title-file {
  margin-left: 26px;
}

.user {
  position: absolute;
  top: 0;
  right: 0;
  display: flex;
  align-items: center;
  gap: 12px;
  width: 231px;
  height: 41px;
  padding: 0 0 4px 12px;
  overflow: hidden;
  border: solid #2b323e;
  border-width: 0 0 2px 2px;
  background: #515a6e;
  color: #f0f1f3;
  font-family: "Noto Sans", sans-serif;
  font-size: 23px;
  white-space: nowrap;
}

.user-caret {
  position: absolute;
  top: 15px;
  right: 1px;
  border: solid transparent;
  border-width: 9px 6px 0;
  border-top-color: #c9ccd1;
}

.tools {
  display: flex;
  justify-content: center;
  gap: 66px;
  height: 60px;
  padding-right: 8px;
}

.tool-group {
  display: flex;
}

.tool {
  position: relative;
  display: flex;
  align-items: center;
  justify-content: center;
  width: 65px;
}

.dot {
  position: absolute;
  top: 9px;
  left: 44px;
  width: 20px;
  height: 20px;
  border: 2px solid #fff;
  border-radius: 50%;
  background: #e8753d;
}

/* main row */
.main {
  display: flex;
  flex: 1;
  min-height: 0;
}

.palette {
  display: flex;
  flex: none;
  flex-direction: column;
  width: 167px;
}

.palette-tabs {
  display: flex;
  flex: none;
  height: 46px;
}

.ptab {
  display: flex;
  align-items: center;
  width: 53px;
  padding-left: 3px;
}

.ptab.cube {
  justify-content: center;
  width: 68px;
  padding: 0;
  border: solid #242b37;
  border-width: 0 2px 2px 1px;
  background: #2f333f;
}

.ptab.more {
  justify-content: center;
  width: 46px;
  padding: 0;
  border-bottom: 2px solid #242b37;
}

.palette-body {
  flex: 1;
  min-height: 0;
  overflow: hidden;
}

.section {
  width: 159px;
  padding-bottom: 11px;
  border-bottom: 2px solid #242b37;
}

.section-head {
  display: flex;
  align-items: center;
  height: 39px;
  padding-top: 4px;
  color: #fff;
  font-family: "Liberation Sans", sans-serif;
}

.section-head h2 {
  flex: 1;
  margin-left: 9px;
  font-size: 20px;
}

.section-head .gear {
  margin-right: 2px;
}

.tri {
  border: solid transparent;
  border-width: 8px 6px 0;
  border-top-color: #fff;
}

.grid {
  display: grid;
  grid-template-columns: repeat(3, 32px);
  grid-auto-rows: 32px;
  gap: 32px 28px;
  padding: 16px 0 16px 1px;
}

.cell {
  position: relative;
}

.cell.fly::after {
  position: absolute;
  right: -6px;
  bottom: -6px;
  border: solid transparent;
  border-width: 0 0 8px 8px;
  border-bottom-color: #9b9ea3;
  content: "";
}

.center {
  display: flex;
  flex: 1;
  flex-direction: column;
  min-width: 0;
  border: solid #242b37;
  border-width: 0 0 0 1px;
}

.doc-tabs {
  display: flex;
  flex: none;
  height: 48px;
  border-right: 2px solid #242b37;
  border-bottom: 4px solid #242b37;
}

.dtab {
  display: flex;
  align-items: center;
  justify-content: center;
  border-right: 2px solid #242b37;
}

.dtab.start {
  width: 49px;
}

.dtab.plus {
  width: 46px;
}

.dtab.file {
  justify-content: flex-start;
  width: 258px;
  padding-left: 6px;
  background: #4f596e;
  color: #fff;
  font-weight: 600;
}

.canvas {
  position: relative;
  flex: 1;
  min-height: 0;
  background: #383f4c;
}

.scene {
  position: absolute;
  width: 100%;
  height: 100%;
}

.model {
  overflow: visible;
}

.edge {
  fill: none;
  stroke: #fff;
  stroke-width: 1.2px;
  vector-effect: non-scaling-stroke;
}

.edge.roof {
  stroke: #e5873a;
}

.edge.rededge {
  stroke: #e0483c;
}

.rod {
  stroke-width: 10px;
  stroke-linecap: round;
  vector-effect: non-scaling-stroke;
}

.rod.thin {
  stroke-width: 8px;
}

.shine {
  stroke-width: 3px;
  vector-effect: non-scaling-stroke;
}

.axis text {
  font-family: Inter, sans-serif;
  font-size: 34px;
  font-weight: 200;
  text-anchor: middle;
}

.axis text.small {
  font-size: 26px;
}

.viewcube text {
  font-family: "Liberation Sans Narrow", "Liberation Sans", sans-serif;
  font-weight: 700;
  text-anchor: middle;
}

.viewcube .dir {
  fill: #cdd0d4;
  font-size: 33px;
}

.viewcube .dir.small {
  fill: #b3b7bd;
  font-size: 24px;
}

.viewcube .face {
  fill: #55585f;
  font-size: 20px;
}

.viewcube .face.mini {
  font-size: 15px;
}

.view-labels {
  position: absolute;
  top: 11px;
  left: 31px;
  display: flex;
  color: #9a9da3;
  font-family: "Noto Sans", sans-serif;
  font-size: 24px;
  line-height: 28px;
}

.view-labels button + button {
  margin-left: 17px;
  padding-left: 11px;
  border-left: 2px solid #858991;
}

.view-labels button:first-child {
  margin-right: 7px;
}

.wcs {
  position: absolute;
  top: 341px;
  right: 111px;
  display: flex;
  align-items: center;
  gap: 14px;
  height: 25px;
  padding: 0 10px;
  border-radius: 6px;
  background: #747a85;
  color: #d6d8dc;
  font-size: 20px;
}

.command {
  position: absolute;
  bottom: 0;
  left: 50%;
  display: flex;
  flex-direction: column;
  width: 1000px;
  margin-left: -500px;
}

.history {
  position: relative;
  margin-left: 79px;
  padding: 10px 11px 0;
  background: #3c4653;
  color: #b6bac1;
  font-family: "Noto Sans", sans-serif;
  font-size: 20px;
  line-height: 30px;
}

.history-bar {
  position: absolute;
  top: 86px;
  right: 11px;
  width: 8px;
  height: 40px;
  border-radius: 4px;
  background: #94989d;
}

.prompt {
  display: flex;
  align-items: center;
  height: 50px;
  padding: 0 20px 0 17px;
  background: #3c4653;
}

.prompt-btn {
  width: 73px;
}

.prompt input {
  flex: 1;
  padding: 0;
  border: 0;
  outline: 0;
  background: none;
  color: #b6bac1;
  font: italic 23px "Noto Sans", sans-serif;
}

.prompt input::placeholder {
  color: #9aa0aa;
  opacity: 1;
}

.caret-sm {
  margin-right: 24px;
  border: solid transparent;
  border-width: 9px 6px 0;
  border-top-color: #94989d;
}

/* right panel */
.panel {
  display: flex;
  flex: none;
  flex-direction: column;
  width: 464px;
}

.panel-tabs {
  display: flex;
  flex: none;
  height: 47px;
}

.rtab {
  position: relative;
  display: flex;
  align-items: center;
  justify-content: center;
  width: 106px;
  border: solid #242b37;
  border-width: 0 0 2px 2px;
  background: #2f333f;
}

.rtab.on {
  width: 103px;
  border: 0;
  background: none;
}

.rtab.end {
  flex: 1;
  padding-left: 8px;
  background: none;
}

.rtab .dot {
  top: -2px;
  left: 57px;
}

.panel-head {
  display: flex;
  flex: none;
  align-items: center;
  justify-content: space-between;
  height: 32px;
  padding: 0 13px 0 21px;
}

.panel-head h2 {
  font-size: 24px;
}

.layer-tools {
  display: flex;
  flex: none;
  gap: 16px;
  margin: 33px 0 21px 28px;
}

.combo {
  position: relative;
  display: flex;
  flex: none;
  align-items: center;
}

.combo select {
  width: 100%;
  height: 100%;
  padding: 0 12px;
  border: 2px solid #323a45;
  border-radius: 4px;
  outline: 0;
  appearance: none;
  background: #525b6f;
  color: #fff;
  font: inherit;
  font-weight: 500;
}

.combo select.indent {
  padding-left: 162px;
}

.combo-icons {
  position: absolute;
  left: 21px;
}

.caret {
  position: absolute;
  right: 9px;
  border: solid transparent;
  border-width: 8px 6px 0;
  border-top-color: #d9d9d9;
  pointer-events: none;
}

.combo.wide {
  height: 54px;
  margin: 0 7px 0 18px;
}

.combo.big {
  height: 54px;
  margin: 2px 9px 0 21px;
}

.toggle {
  display: flex;
  flex: none;
  align-items: center;
  gap: 22px;
  height: 48px;
  padding-left: 27px;
  color: #c6c9ce;
}

.layer-list {
  flex: none;
  min-height: 422px;
  margin: 7px 13px 0 21px;
  border: solid #303744;
  border-width: 2px 1px;
  background: #4f5a6b;
}

.layer-list table {
  width: 100%;
  border-collapse: collapse;
  table-layout: fixed;
}

.c1 {
  width: 62px;
}

.c2 {
  width: 115px;
}

.c3 {
  width: 44px;
}

.c4 {
  width: 94px;
}

.layer-list th {
  position: relative;
  height: 46px;
  padding: 0;
  border-right: 2px solid #2a303c;
  border-bottom: 2px solid #2a303c;
  background: #2f333f;
}

.layer-list th svg {
  margin: 0 auto;
}

.layer-list th.last {
  border-right: 0;
}

.layer-list th.last svg {
  margin-right: 13px;
}

.layer-list th.sorted {
  background: #4f5a6d;
}

.name-head {
  display: flex;
  align-items: center;
  gap: 15px;
  padding: 0 14px 0 8px;
  color: #d9d9d9;
}

.layer-list .name-head svg {
  margin: 0;
}

.sort-mark {
  position: absolute;
  bottom: 0;
  left: 50px;
  border: solid transparent;
  border-width: 0 6px 9px;
  border-bottom-color: #4a93f0;
}

.layer-list td {
  height: 38px;
  padding: 0;
  color: #fff;
  font-weight: 500;
  line-height: 28px;
  white-space: nowrap;
}

.selected td {
  background: #929dae;
}

.bulb {
  display: block;
  width: 16px;
  height: 16px;
  margin-left: 28px;
  border-radius: 50%;
  background: #d9d9d9;
}

.swatch {
  display: inline-block;
  width: 18px;
  height: 18px;
  margin-right: 18px;
  border: 2px solid #000;
  background: #fff;
  vertical-align: -2px;
}

.swatch.orange {
  background: #f39a35;
}

.layer-list td.weight {
  padding-left: 14px;
}

.ltype {
  display: block;
  height: 2px;
  margin-left: 16px;
  background: #fff;
}

.hscroll {
  flex: none;
  height: 31px;
  margin: 0 13px 0 21px;
  padding: 12px 7px;
  border: solid #353c49;
  border-width: 0 1px 1px;
}

.hscroll i {
  display: block;
  width: 84%;
  height: 10px;
  border-radius: 5px;
  background: #8a8f99;
}

.list-tools {
  display: flex;
  flex: none;
  align-items: center;
  gap: 31px;
  height: 52px;
  padding: 0 24px 2px 37px;
}

.list-tools .minus {
  width: 16px;
  height: 3px;
  margin-left: auto;
  background: #7f8692;
}

.search {
  display: flex;
  flex: none;
  align-items: center;
  gap: 10px;
  height: 40px;
  margin: 0 14px 18px 22px;
  padding: 0 9px;
  border-radius: 8px;
  background: #fff;
}

.search input {
  flex: 1;
  min-width: 0;
  padding: 0;
  border: 0;
  outline: 0;
  background: none;
  font: 25px Inter, sans-serif;
}

.search input::placeholder {
  color: #bcbcbc;
  opacity: 1;
}

.props-head {
  height: 49px;
  gap: 20px;
  padding-bottom: 15px;
  border-top: 2px solid #242b37;
}

.props-head h2 {
  flex: 1;
}

.switch {
  display: flex;
  height: 28px;
  border: 2px solid #2c323e;
  color: #7e8590;
  font-size: 18px;
}

.switch button {
  width: 56px;
  text-align: center;
}

.switch .on {
  width: 62px;
  border-left: 2px solid #2c323e;
  background: #4f5a6d;
  color: #fff;
  font-weight: 500;
}

.combo.space {
  height: 42px;
  margin: 0 13px 0 21px;
}

.combo.space select {
  border-color: #3a4150;
  background: #444c5c;
  color: #7f8796;
  opacity: 1;
}

.combo.space .caret {
  border-top-color: #7f8796;
}

.props {
  display: flex;
  flex: 1;
  min-height: 0;
  margin: 13px 12px 16px 67px;
  overflow: hidden;
}

.prop-list {
  display: flex;
  flex: 1;
  flex-direction: column;
  gap: 10px;
  min-width: 0;
}

.prop {
  display: flex;
  flex: none;
  align-items: center;
  height: 36px;
}

.prop label {
  flex: none;
  width: 153px;
  color: #cfd2d6;
  white-space: nowrap;
}

.prop label span {
  display: inline-block;
  min-width: 133px;
  text-align: right;
}

.combo.small,
.transparency {
  flex: 1;
  min-width: 0;
  height: 36px;
  margin-right: 15px;
}

.combo.small select.color {
  padding-left: 56px;
}

.combo.small select.line {
  padding-left: 106px;
}

.swatch.over {
  position: absolute;
  left: 17px;
}

.ltype.over {
  position: absolute;
  left: 0;
  width: 64px;
}

.field,
.transparency input {
  flex: 1;
  min-width: 0;
  height: 36px;
  margin-right: 15px;
  padding: 0 6px;
  border: 2px solid #323a45;
  border-radius: 4px;
  outline: 0;
  background: #525b6f;
  color: #fff;
  font: inherit;
  font-weight: 500;
}

.transparency {
  display: flex;
  align-items: center;
  gap: 6px;
}

.transparency input {
  height: 34px;
  margin: 0 0 0 6px;
  border-radius: 0;
  background: linear-gradient(#9aa0ad, #9aa0ad) 48% 85% / 1px 12px no-repeat, linear-gradient(#6f9be6, #6f9be6) 0 0 / 3px 6px no-repeat, linear-gradient(#6f9be6, #6f9be6) 0 100% / 3px 6px no-repeat, #525b6f;
  text-align: right;
}

.transparency button {
  display: flex;
  flex: none;
  align-items: center;
  justify-content: space-between;
  width: 77px;
  height: 36px;
  padding: 0 8px 0 14px;
  border: 2px solid #323a45;
  border-radius: 4px;
  background: #525b6f;
}

.caret-inline {
  border: solid transparent;
  border-width: 8px 6px 0;
  border-top-color: #d9d9d9;
}

.vscroll {
  flex: none;
  width: 10px;
  height: 302px;
  border-radius: 5px;
  background: #8a8f99;
}

/* status bar */
.status {
  display: flex;
  flex: none;
  height: 46px;
  border-bottom: 2px solid #242b37;
  background: #3b4351;
  color: #a2a7b0;
  font-size: 22px;
}

.palette-foot {
  display: flex;
  align-items: center;
  gap: 35px;
  width: 167px;
  padding-left: 18px;
}

.stab {
  display: flex;
  align-items: center;
  justify-content: center;
  border: solid #242b37;
  border-width: 2px 2px 0 0;
}

.model-tab {
  width: 120px;
  border-left-width: 2px;
  background: #4f596e;
  color: #fff;
  font-size: 21px;
  font-weight: 600;
}

.stab.add {
  width: 48px;
}

.stab.a3 {
  width: 113px;
}

.stab.layout {
  width: 122px;
}

.status-right {
  display: flex;
  flex: 1;
  align-items: center;
  justify-content: flex-end;
  border-top: 2px solid #242b37;
}

.coords {
  display: flex;
  align-items: center;
  align-self: stretch;
  padding: 0 6px 0 16px;
  border-left: 2px solid #242b37;
  font-size: 23px;
  white-space: nowrap;
}

.sbtn {
  display: flex;
  align-items: center;
  justify-content: center;
  width: 44px;
  height: 40px;
}

.sbtn.on {
  width: 40px;
  margin: 0 2px;
  background: #6b90c2;
}

.scale {
  display: flex;
  align-items: center;
  justify-content: space-between;
  width: 44px;
  margin-right: 12px;
  font-size: 21px;
}

.desktop {
  flex: none;
  height: 5px;
  background: #4d4543;
}
</style>
